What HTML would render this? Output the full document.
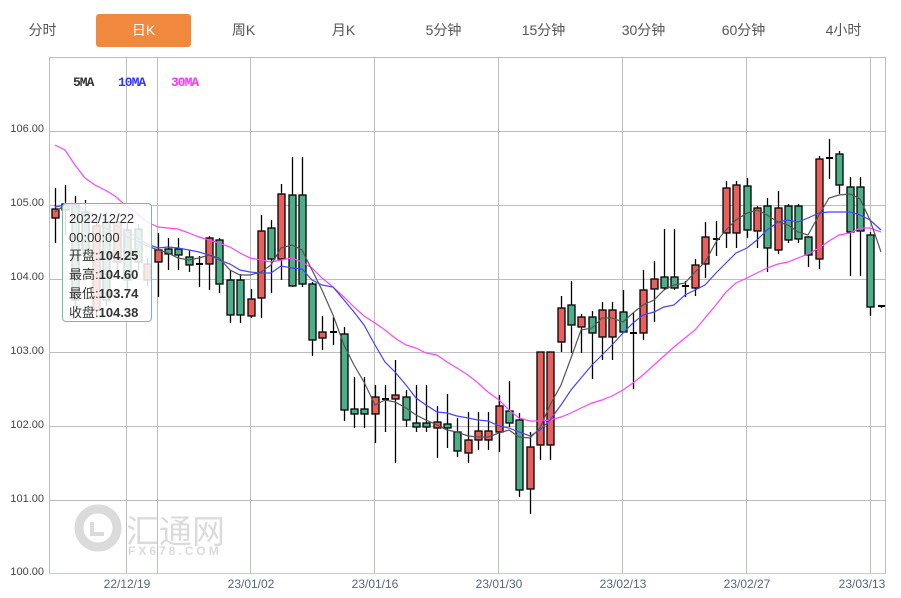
<!DOCTYPE html>
<html><head><meta charset="utf-8">
<style>
html,body{margin:0;padding:0;background:#fff;}
body{width:901px;height:598px;overflow:hidden;position:relative;font-family:"Liberation Sans","Noto Sans CJK SC",sans-serif;}
.tab{position:absolute;top:14px;height:33px;line-height:33px;width:95px;text-align:center;font-size:14px;color:#555;}
.tab.on{background:#f0883e;color:#fff;border-radius:3px;}
svg{position:absolute;left:0;top:0;}
.tip{position:absolute;left:62px;top:203px;width:90px;height:119px;border:1px solid #6cbf9f;border-radius:4px;background:rgba(255,255,255,0.85);font-size:13px;color:#333;line-height:18.7px;padding:6px 0 0 6px;box-sizing:border-box;white-space:nowrap;}
.tip b{font-weight:bold;}
</style></head><body>
<div class="tab" style="left:-5px">分时</div>
<div class="tab on" style="left:96px">日K</div>
<div class="tab" style="left:196px">周K</div>
<div class="tab" style="left:296px">月K</div>
<div class="tab" style="left:396px">5分钟</div>
<div class="tab" style="left:496px">15分钟</div>
<div class="tab" style="left:596px">30分钟</div>
<div class="tab" style="left:696px">60分钟</div>
<div class="tab" style="left:796px">4小时</div>
<svg width="901" height="598" xmlns="http://www.w3.org/2000/svg">
<g stroke="#bdbdbd" stroke-width="1" fill="none">
<line x1="49" y1="57.5" x2="886" y2="57.5"/>
<line x1="49.5" y1="57" x2="49.5" y2="573"/>
<line x1="49" y1="131.5" x2="886" y2="131.5"/>
<line x1="49" y1="205.5" x2="886" y2="205.5"/>
<line x1="49" y1="279.5" x2="886" y2="279.5"/>
<line x1="49" y1="352.5" x2="886" y2="352.5"/>
<line x1="49" y1="426.5" x2="886" y2="426.5"/>
<line x1="49" y1="500.5" x2="886" y2="500.5"/>
<line x1="126.5" y1="57" x2="126.5" y2="573"/>
<line x1="157.5" y1="57" x2="157.5" y2="573"/>
<line x1="250.5" y1="57" x2="250.5" y2="573"/>
<line x1="374.5" y1="57" x2="374.5" y2="573"/>
<line x1="498.5" y1="57" x2="498.5" y2="573"/>
<line x1="622.5" y1="57" x2="622.5" y2="573"/>
<line x1="746.5" y1="57" x2="746.5" y2="573"/>
<line x1="870.5" y1="57" x2="870.5" y2="573"/>
<line x1="885.5" y1="57" x2="885.5" y2="573"/>
</g>
<line x1="49" y1="573.5" x2="886" y2="573.5" stroke="#c3cad8"/>
<g font-family="Liberation Sans,sans-serif" font-size="11" fill="#444" text-anchor="end">
<text x="44" y="132">106.00</text><text x="44" y="206">105.00</text><text x="44" y="280">104.00</text>
<text x="44" y="354">103.00</text><text x="44" y="428">102.00</text><text x="44" y="502">101.00</text><text x="44" y="575">100.00</text>
</g>
<g font-family="Liberation Sans,sans-serif" font-size="12" fill="#556680" text-anchor="middle">
<text x="127" y="588">22/12/19</text><text x="251" y="588">23/01/02</text><text x="375" y="588">23/01/16</text>
<text x="499" y="588">23/01/30</text><text x="623" y="588">23/02/13</text><text x="747" y="588">23/02/27</text><text x="862" y="588">23/03/13</text>
</g>
<g font-family="Liberation Mono,monospace" font-size="13" font-weight="bold" letter-spacing="-1">
<text x="73" y="86" fill="#333">5MA</text><text x="118" y="86" fill="#3333ff">10MA</text><text x="171" y="86" fill="#ff33ff">30MA</text>
</g>
<!-- watermark -->
<g opacity="0.75">
<circle cx="98" cy="528" r="19" fill="none" stroke="#d0d0d0" stroke-width="9"/>
<path d="M92 522 L92 534 L104 534" fill="none" stroke="#d0d0d0" stroke-width="4"/>
<text x="126" y="543" font-family="Noto Sans CJK SC,sans-serif" font-size="33" fill="#d0d0d0">汇通网</text>
<text x="128" y="555" font-family="Liberation Sans,sans-serif" font-size="12" fill="#d0d0d0" letter-spacing="3" font-weight="bold">FX678.COM</text>
</g>
<g id="candles" stroke="#000" stroke-width="1.3"></g>
<g fill="none" stroke-width="1.2">
<polyline stroke="#ff44ff" points="55,145 65,150 75,165 85,178 95,185 105,190 115,196 125,205 135,212 147,222 158,227 168,228 178,229 189,233 199,237 209,240 219,243 230,247 240,253 250,258 261,260 271,262 281,260 292,258 302,262 312,268 322,278 333,287 344,297 354,307 364,316 375,323 385,330 395,338 406,345 416,348 426,353 437,355 447,362 457,368 468,375 478,383 488,392 499,400 509,410 519,418 530,421 540,421 550,420 561,417 571,413 581,408 592,403 602,400 612,396 623,390 633,383 643,375 654,365 664,356 674,347 685,338 695,330 705,318 716,305 726,292 736,283 747,278 757,273 767,268 778,264 788,262 798,258 808,254 819,248 829,241 839,235 850,233 860,228 870,228 881,232"/>
<polyline stroke="#4444ff" points="55,207 65,205 75,205 85,210 95,215 105,220 115,225 125,230 135,236 147,244 158,248 168,247 178,248 189,250 199,252 209,255 219,260 230,264 240,270 250,272 261,273 271,273 281,266 292,268 302,269 312,280 322,285 333,287 344,300 354,312 364,325 375,345 385,362 395,372 406,385 416,398 426,405 437,412 447,413 457,416 468,418 478,420 488,421 499,426 509,428 519,432 530,436 540,430 550,420 561,405 571,390 581,378 592,365 602,355 612,345 623,333 633,323 643,315 654,312 664,307 674,305 685,295 695,290 705,285 716,273 726,263 736,253 747,248 757,240 767,230 778,222 788,220 798,222 808,218 819,213 829,212 839,212 850,212 860,215 870,220 881,230"/>
<polyline stroke="#555" points="55,212 65,205 75,206 85,214 95,222 105,228 115,232 125,236 135,240 147,246 158,250 168,253 178,258 189,260 199,258 209,255 219,258 230,270 240,275 250,275 261,272 271,265 281,248 292,245 302,250 312,270 322,290 333,315 344,345 354,365 364,382 375,405 385,400 395,402 406,408 416,415 426,420 437,425 447,430 457,432 468,436 478,437 488,437 499,433 509,430 519,437 530,438 540,428 550,405 561,385 571,358 581,330 592,328 602,318 612,318 623,322 633,313 643,305 654,300 664,290 674,285 685,283 695,272 705,262 716,242 726,230 736,220 747,213 757,210 767,215 778,222 788,225 798,232 808,235 819,215 829,198 839,195 850,194 860,199 870,220 881,252"/>
</g>
</svg>
<div class="tip">2022/12/22<br>00:00:00<br>开盘:<b>104.25</b><br>最高:<b>104.60</b><br>最低:<b>103.74</b><br>收盘:<b>104.38</b></div>
<script>
var R='#e8605e',G='#4caf88';
var d=[
[55,209,218,188,243,R],[65,204,210,185,235,G],[75,204,300,196,306,G],[85,212,250,200,260,G],[96,226,310,215,318,R],[106,222,300,212,306,G],[117,222,262,215,270,R],[127,230,280,222,290,G],[138,229,262,224,270,G],[147,264,280,258,286,R],
[158,250,262,233,297,R],[168,249,254,238,270,G],[178,249,255,238,270,G],[189,257,265,250,272,G],[199,264,264,256,287,'d'],[209,238,264,236,290,R],[219,240,284,238,293,G],[230,280,315,270,323,G],[240,280,315,274,323,G],[251,299,316,289,318,R],
[261,231,298,215,318,R],[271,228,259,220,293,G],[281,194,259,184,280,R],[292,195,286,157,287,G],[302,195,284,157,287,G],[312,284,340,282,356,G],[322,332,338,316,350,R],[333,332,332,317,345,'d'],[344,334,410,327,421,G],[354,409,414,377,428,G],
[364,409,414,377,428,G],[375,397,414,385,443,R],[385,399,399,385,432,'d'],[395,395,399,360,463,R],[406,397,420,390,427,G],[416,423,427,385,432,G],[426,423,427,385,432,G],[437,422,428,406,458,R],[447,424,428,394,448,G],[457,432,451,418,457,G],
[468,440,453,412,463,R],[478,431,440,412,450,R],[488,431,440,412,450,R],[499,406,432,395,452,R],[509,411,423,381,427,G],[519,420,490,413,497,G],[530,447,489,432,514,R],[540,352,445,352,460,R],[550,352,445,352,460,R],[561,308,342,296,352,R],
[571,305,325,281,353,G],[581,317,327,314,353,R],[592,317,333,311,379,G],[602,310,337,302,360,R],[612,310,337,302,360,R],[623,312,332,290,333,G],[633,333,333,313,389,'d'],[643,290,333,270,340,R],[654,279,289,261,322,R],[664,277,288,229,290,G],
[674,277,288,229,290,G],[685,286,286,281,297,'d'],[695,265,288,259,296,R],[705,237,264,222,278,R],[716,239,239,221,256,'d'],[726,188,233,181,248,R],[736,185,233,181,248,R],[747,186,230,178,238,G],[757,208,231,206,248,R],[767,206,248,198,272,G],
[778,208,250,191,254,R],[788,206,240,204,243,G],[798,206,239,204,243,G],[808,237,255,236,267,G],[819,159,259,156,269,R],[829,158,158,139,179,'d'],[839,154,185,151,194,G],[850,187,232,177,276,G],[860,187,231,177,276,G],[870,235,307,232,316,G],[881,306,306,305,308,'d']];
var g=document.getElementById('candles'),s='';
d.forEach(function(c){var x=c[0];
s+='<line x1="'+(x+.5)+'" y1="'+c[3]+'" x2="'+(x+.5)+'" y2="'+c[4]+'"/>';
if(c[5]=='d'){s+='<line x1="'+(x-3)+'" y1="'+c[1]+'" x2="'+(x+4)+'" y2="'+c[1]+'" stroke-width="2"/>';}
else{s+='<rect x="'+(x-3)+'" y="'+c[1]+'" width="7" height="'+Math.max(2,c[2]-c[1])+'" fill="'+c[5]+'"/>';}
});
g.innerHTML=s;
</script>
</body></html>
